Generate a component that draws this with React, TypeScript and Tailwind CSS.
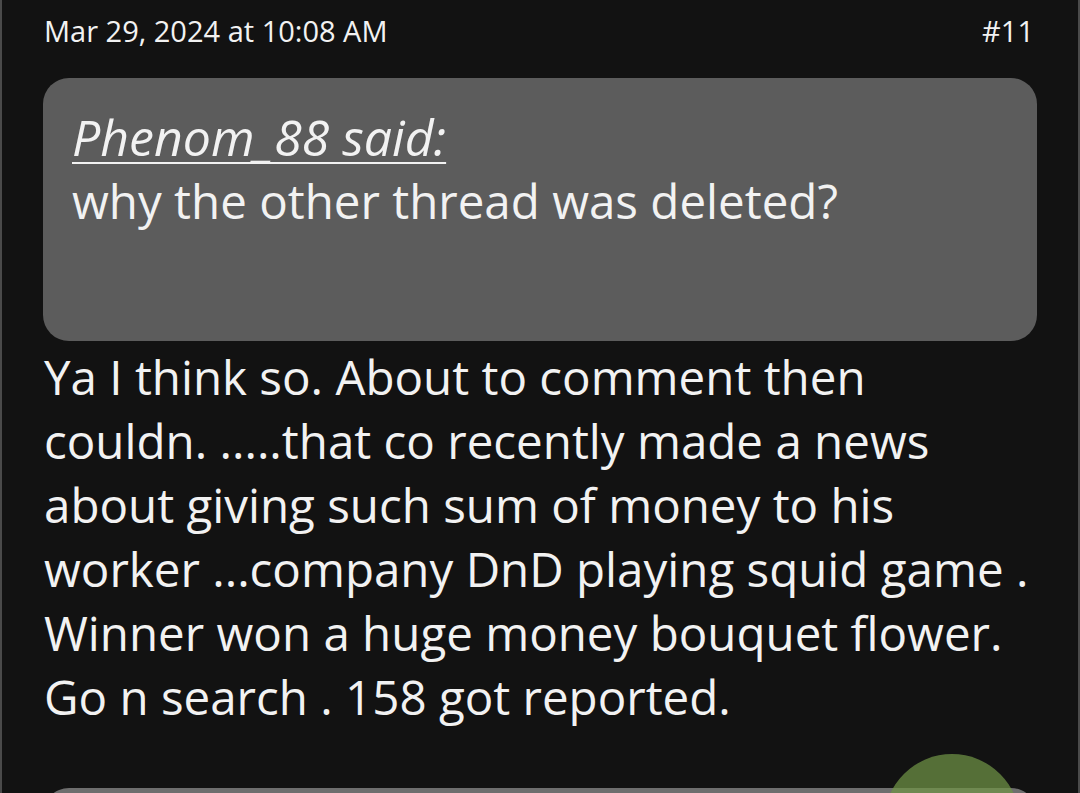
import React from "react";

export default function App() {
  return (
    <div
      className="relative w-[1080px] h-[793px] overflow-hidden bg-[#121212] border-l-2 border-r-2 border-[#4a4a4a] text-[#f2f2f2]"
      style={{ fontFamily: '"Open Sans", sans-serif' }}
    >
      <div className="flex justify-between pl-[42px] pr-[44px] pt-[12px] text-[29px] leading-[38px]">
        <span>Mar 29, 2024 at 10:08 AM</span>
        <span>#11</span>
      </div>
      <div className="mx-[41px] mt-[28px] h-[263px] rounded-[26px] bg-[#5c5c5c] px-[29px] pt-[27px] text-[47.5px] leading-[64px]">
        <div className="italic underline decoration-2 underline-offset-[6px] text-[50px]">Phenom_88 said:</div>
        <div>why the other thread was deleted?</div>
      </div>
      <div className="pl-[42px] pr-[20px] pt-[4px] text-[47.5px] leading-[64px] whitespace-nowrap">
        Ya I think so. About to comment then
        <br />
        couldn. .....that co recently made a news
        <br />
        about giving such sum of money to his
        <br />
        worker ...company DnD playing squid game .
        <br />
        Winner won a huge money bouquet flower.
        <br />
        Go n search . 158 got reported.
      </div>
      <div className="mx-[41px] mt-[59px] h-[60px] rounded-[26px] bg-[#6e6e6e]" />
      <div className="absolute left-[882px] top-[754px] w-[136px] h-[136px] rounded-full bg-[rgba(111,147,70,0.73)]" />
    </div>
  );
}
